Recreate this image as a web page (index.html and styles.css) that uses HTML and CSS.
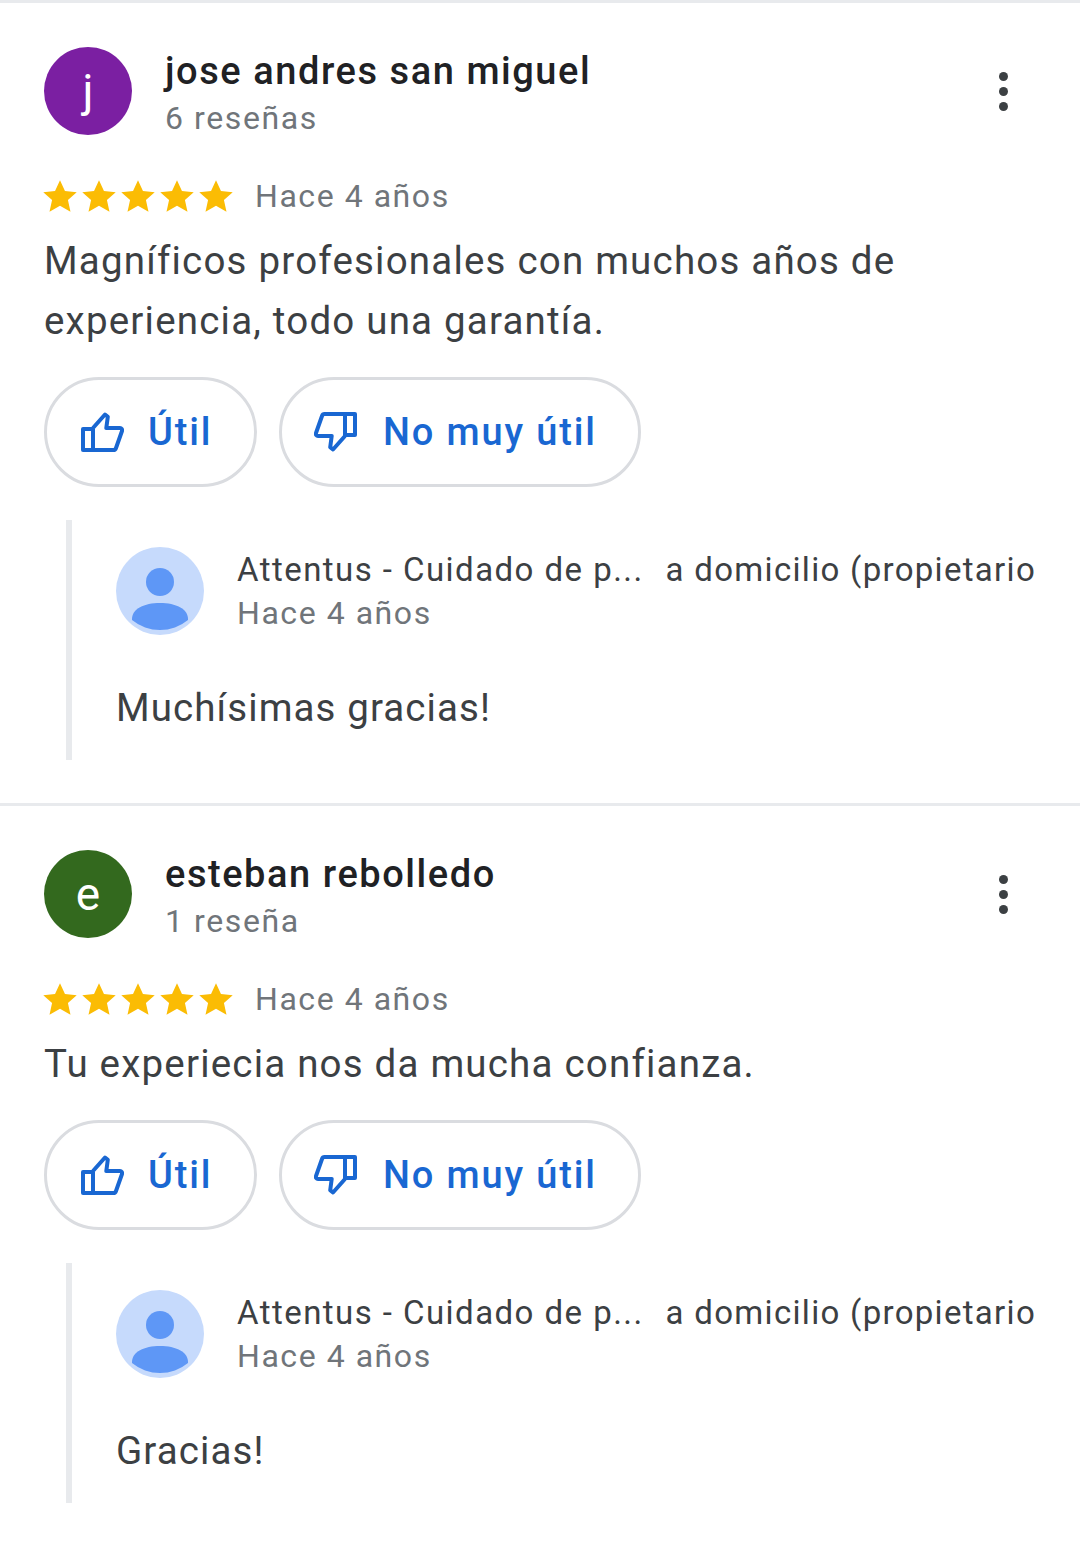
FILE: index.html
```html
<!DOCTYPE html>
<html lang="es">
<head>
<meta charset="utf-8">
<title>Reseñas</title>
<link rel="stylesheet" href="styles.css">
</head>
<body>
<svg class="defs" width="0" height="0" aria-hidden="true">
  <defs>
    <symbol id="star" viewBox="0 0 24 24"><path d="M12 .8l3.500 7.600 8.300.9-6.200 5.600 1.800 8.200L12 18.900l-7.400 4.200 1.800-8.200L.2 9.300l8.300-.9z"/></symbol>
    <symbol id="up" viewBox="0 0 43 40"><path d="M2 17h10v21H2zM12 16L24 2.500l2.800 2.300-1.500 11.200H39c1.500 0 2.500 1.300 2 3L35 36c-.4 1.200-1.300 2-2.500 2H12" fill="none" stroke="currentColor" stroke-width="4" stroke-linejoin="round"/></symbol>
    <symbol id="down" viewBox="0 0 43 40"><path d="M41 23H31V2h10zM31 24L19 37.500l-2.800-2.300 1.500-11.200H4c-1.500 0-2.500-1.300-2-3L8 4c.4-1.200 1.300-2 2.500-2H31" fill="none" stroke="currentColor" stroke-width="4" stroke-linejoin="round"/></symbol>
    <symbol id="person" viewBox="0 0 88 88"><circle cx="44" cy="44" r="44" fill="#c6dafc"/><circle cx="44" cy="35" r="14" fill="#5e97f6"/><path d="M16 72c0-10 12-16 28-16s28 6 28 16v1a44 44 0 0 1-56 0z" fill="#5e97f6"/></symbol>
  </defs>
</svg>
<main class="page">
  <article class="review review-first">
    <header class="author">
      <div class="avatar avatar-purple">j</div>
      <div class="author-text">
        <h2 class="name">jose andres san miguel</h2>
        <p class="count">6 reseñas</p>
      </div>
      <div class="more"><span></span><span></span><span></span></div>
    </header>
    <div class="rating">
      <div class="stars">
        <svg class="star"><use href="#star"/></svg><svg class="star"><use href="#star"/></svg><svg class="star"><use href="#star"/></svg><svg class="star"><use href="#star"/></svg><svg class="star"><use href="#star"/></svg>
      </div>
      <span class="age">Hace 4 años</span>
    </div>
    <p class="body">Magníficos profesionales con muchos años de experiencia, todo una garantía.</p>
    <div class="actions">
      <button class="pill pill-up"><svg class="thumb"><use href="#up"/></svg>Útil</button>
      <button class="pill pill-down"><svg class="thumb"><use href="#down"/></svg>No muy útil</button>
    </div>
    <section class="reply">
      <div class="reply-head">
        <svg class="owner"><use href="#person"/></svg>
        <div class="reply-text">
          <p class="owner-name"><span class="trunc">Attentus - Cuidado de p...</span><span>a domicilio (propietario</span></p>
          <p class="reply-age">Hace 4 años</p>
        </div>
      </div>
      <p class="reply-body">Muchísimas gracias!</p>
    </section>
  </article>
  <article class="review">
    <header class="author">
      <div class="avatar avatar-green">e</div>
      <div class="author-text">
        <h2 class="name">esteban rebolledo</h2>
        <p class="count">1 reseña</p>
      </div>
      <div class="more"><span></span><span></span><span></span></div>
    </header>
    <div class="rating">
      <div class="stars">
        <svg class="star"><use href="#star"/></svg><svg class="star"><use href="#star"/></svg><svg class="star"><use href="#star"/></svg><svg class="star"><use href="#star"/></svg><svg class="star"><use href="#star"/></svg>
      </div>
      <span class="age">Hace 4 años</span>
    </div>
    <p class="body">Tu experiecia nos da mucha confianza.</p>
    <div class="actions">
      <button class="pill pill-up"><svg class="thumb"><use href="#up"/></svg>Útil</button>
      <button class="pill pill-down"><svg class="thumb"><use href="#down"/></svg>No muy útil</button>
    </div>
    <section class="reply">
      <div class="reply-head">
        <svg class="owner"><use href="#person"/></svg>
        <div class="reply-text">
          <p class="owner-name"><span class="trunc">Attentus - Cuidado de p...</span><span>a domicilio (propietario</span></p>
          <p class="reply-age">Hace 4 años</p>
        </div>
      </div>
      <p class="reply-body">Gracias!</p>
    </section>
  </article>
</main>
</body>
</html>
```
FILE: styles.css
```css
* { box-sizing: border-box; }
html, body { margin: 0; padding: 0; }
body {
  width: 1080px;
  height: 1542px;
  overflow: hidden;
  background: #fff;
  font-family: Roboto, "Noto Sans", sans-serif;
}
.defs { position: absolute; }
.page { display: flex; flex-direction: column; }
p, h2 { margin: 0; font-weight: 400; }

.review {
  border-top: 3px solid #e8eaed;
  padding: 44px 44px 0;
}
.review-first { height: 803px; }
.review:not(.review-first) { height: 739px; }

.author { display: flex; align-items: flex-start; height: 88px; }
.avatar {
  width: 88px; height: 88px; border-radius: 50%;
  color: #fff; font-size: 46px; line-height: 88px; text-align: center;
  flex: none;
}
.avatar-purple { background: #7b1fa2; }
.avatar-green { background: #33691e; }
.author-text { margin-left: 33px; flex: 1; }
.name {
  font-size: 38px; line-height: 48px; font-weight: 500;
  color: #202124; letter-spacing: 1.55px;
}
.count {
  font-size: 32px; line-height: 46px; color: #70757a; letter-spacing: 1.6px;
}
.more {
  display: flex; flex-direction: column; gap: 6px;
  margin: 25px 28px 0 0;
}
.more span { width: 9px; height: 9px; border-radius: 50%; background: #3c4043; }

.rating { display: flex; align-items: center; margin-top: 41px; height: 40px; }
.stars { display: flex; gap: 5px; width: 211px; margin-left: -1px; }
.star { width: 34px; height: 34px; fill: #fbbc04; flex: none; }
.age { font-size: 32px; color: #70757a; letter-spacing: 1.55px; margin-left: 1px; }

.body {
  margin-top: 15px;
  font-size: 38.5px; line-height: 60px; color: #3c4043; letter-spacing: 1.2px;
  font-variant-ligatures: common-ligatures;
  width: 900px;
}
.actions { display: flex; gap: 22px; margin-top: 26px; }
.pill {
  height: 110px; border: 3px solid #dadce0; border-radius: 55px;
  background: #fff; color: #1967d2;
  font-family: inherit; font-size: 38px; font-weight: 500; letter-spacing: 1.85px;
  display: flex; align-items: center; padding: 0;
}
.pill-up { width: 213px; padding-left: 34px; }
.pill-down { width: 362px; padding-left: 32px; }
.thumb { width: 43px; height: 40px; flex: none; color: #1967d2; margin-right: 24px; }
.pill-down .thumb { margin-right: 26px; }

.reply {
  margin: 33px 0 0 22px;
  border-left: 6px solid #e8eaed;
  padding: 27px 0 0 44px;
  height: 240px;
}
.reply-head { display: flex; }
.owner { width: 88px; height: 88px; flex: none; }
.reply-text { margin-left: 33px; }
.owner-name {
  font-size: 33px; line-height: 44px; color: #3c4043; white-space: nowrap;
  display: flex; gap: 22px; letter-spacing: 1.3px; padding-top: 1px;
}
.trunc { letter-spacing: 1.45px; }
.reply-age { font-size: 32px; line-height: 43px; color: #70757a; letter-spacing: 1.55px; }
.reply-body {
  margin-top: 48px;
  font-size: 38.5px; line-height: 50px; color: #3c4043; letter-spacing: 1.1px;
}
```
